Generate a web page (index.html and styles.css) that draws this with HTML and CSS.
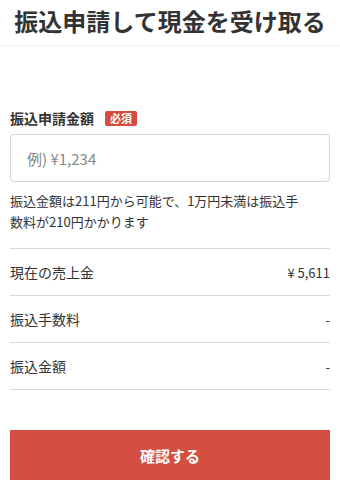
FILE: index.html
```html
<!DOCTYPE html>
<html lang="ja">
<head>
<meta charset="utf-8">
<link rel="stylesheet" href="styles.css">
</head>
<body>
<header class="header">
  <h1 class="title">振込申請して現金を受け取る</h1>
</header>
<main class="main">
  <div class="label-row">
    <span class="label">振込申請金額</span>
    <span class="badge">必須</span>
  </div>
  <div class="input"><span class="placeholder">例) ¥1,234</span></div>
  <p class="help">振込金額は211円から可能で、1万円未満は振込手数料が210円かかります</p>
  <ul class="list">
    <li class="row"><span>現在の売上金</span><span class="value">¥ 5,611</span></li>
    <li class="row"><span>振込手数料</span><span class="value">-</span></li>
    <li class="row"><span>振込金額</span><span class="value">-</span></li>
  </ul>
  <button class="button">確認する</button>
</main>
</body>
</html>
```
FILE: styles.css
```css
* { box-sizing: border-box; }
html, body {
  margin: 0;
  padding: 0;
  background: #fff;
  color: #333;
  font-family: "Noto Sans CJK JP", "Noto Sans", sans-serif;
}
.header {
  height: 46px;
  border-bottom: 1px solid #eeeeee;
  display: flex;
  justify-content: center;
}
.title {
  margin: 0;
  font-size: 24px;
  line-height: 42px;
  font-weight: 700;
  color: #333;
}
.main {
  padding: 62px 10px 0;
}
.label-row {
  display: flex;
  align-items: center;
  height: 20px;
  gap: 11px;
}
.label {
  font-size: 14px;
  font-weight: 700;
  line-height: 20px;
}
.badge {
  background: #d54b3f;
  color: #fff;
  font-size: 11px;
  font-weight: 700;
  height: 15px;
  line-height: 15px;
  padding: 0 5px;
  border-radius: 2px;
  margin-top: 1px;
}
.input {
  margin-top: 6px;
  height: 48px;
  border: 1px solid #d4d4d4;
  border-radius: 4px;
  display: flex;
  align-items: center;
  padding-left: 16px;
}
.placeholder {
  font-size: 15px;
  color: #8a8a8a;
}
.help {
  margin: 8px 0 0;
  font-size: 13px;
  line-height: 21px;
  padding-right: 20px;
}
.list {
  list-style: none;
  margin: 16px 0 0;
  padding: 0;
  border-top: 1px solid #d8d8d8;
}
.row {
  height: 47px;
  border-bottom: 1px solid #d8d8d8;
  display: flex;
  align-items: center;
  justify-content: space-between;
  font-size: 14px;
}
.value {
  font-size: 13px;
}
.button {
  display: block;
  width: 100%;
  margin-top: 40px;
  height: 50px;
  border: none;
  border-radius: 0;
  background: #d54e42;
  color: #fff;
  font-family: inherit;
  font-size: 15px;
  font-weight: 700;
}
```
